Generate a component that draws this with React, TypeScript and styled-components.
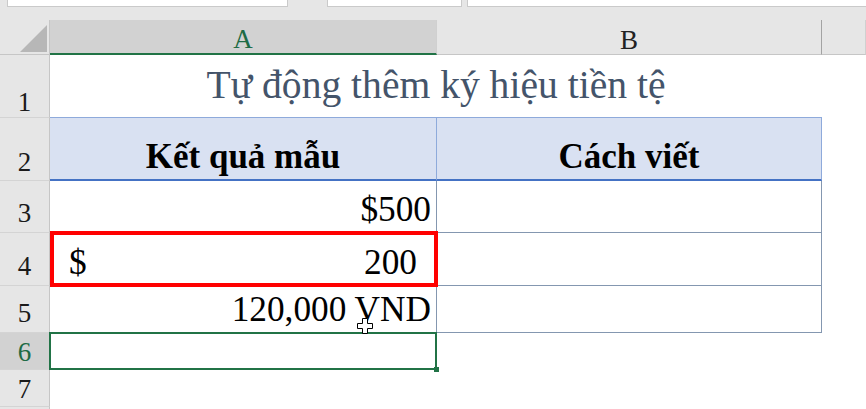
import React from "react";
import styled, { createGlobalStyle } from "styled-components";

const GlobalStyle = createGlobalStyle`
  html, body { margin: 0; padding: 0; background: #fff; overflow: hidden; }
  body { font-family: 'Liberation Serif', serif; }
`;

const Page = styled.div`
  width: 866px;
  height: 409px;
  display: flex;
  flex-direction: column;
  background: #fff;
  overflow: hidden;
  font-family: 'Liberation Serif', serif;
`;

const TopBar = styled.div`
  height: 20px;
  flex: none;
  background: #e6e6e6;
  display: flex;
  align-items: flex-start;
  padding-left: 7px;
  box-sizing: border-box;
`;

const FieldBox = styled.div<{ $w?: number; $ml?: number }>`
  height: 7px;
  background: #fff;
  border: 1px solid #cacaca;
  border-top: none;
  box-sizing: border-box;
  margin-left: ${(p) => p.$ml ?? 0}px;
  ${(p) => (p.$w ? `width: ${p.$w}px; flex: none;` : "flex: 1; border-right: none;")}
`;

const Sheet = styled.div`
  flex: none;
  display: grid;
  grid-template-columns: 50px 387px 385px 1fr;
  grid-template-rows: 35px 63px 63px 52px 53px 47px 37px 37px 10px;
  font-family: 'Liberation Serif', serif;
`;

const Corner = styled.div`
  background: #e6e6e6;
  border-right: 1px solid #c6c6c6;
  border-bottom: 1px solid #c6c6c6;
  box-sizing: border-box;
  display: flex;
  align-items: flex-end;
  justify-content: flex-end;
  padding: 0 2px 2px 0;
`;

const ColHead = styled.div<{ $sel?: boolean; $edge?: boolean }>`
  background: ${(p) => (p.$sel ? "#d2d2d2" : "#e6e6e6")};
  border-bottom: ${(p) => (p.$sel ? "2px solid #217346" : "1px solid #c6c6c6")};
  border-right: 1px solid ${(p) => (p.$edge ? "#a3a3a3" : "#d0d0d0")};
  color: ${(p) => (p.$sel ? "#1e6b45" : "#222")};
  font-family: 'Liberation Serif', serif;
  font-size: 27px;
  line-height: 1;
  display: flex;
  align-items: flex-end;
  justify-content: center;
  box-sizing: border-box;
`;

const RowHead = styled.div<{ $sel?: boolean; $pb: number }>`
  background: ${(p) => (p.$sel ? "#d2d2d2" : "#e6e6e6")};
  border-right: 1px solid #c6c6c6;
  border-bottom: 1px solid #d4d4d4;
  color: ${(p) => (p.$sel ? "#1e6b45" : "#1a1a1a")};
  font-family: 'Liberation Serif', serif;
  font-size: 27px;
  line-height: 1;
  display: flex;
  align-items: flex-end;
  justify-content: center;
  padding-bottom: ${(p) => p.$pb}px;
  box-sizing: border-box;
  overflow: hidden;
`;

const TitleCell = styled.div`
  grid-column: span 2;
  border-bottom: 1px solid #8eaadb;
  color: #44546a;
  font-family: 'Liberation Serif', serif;
  font-size: 39.6px;
  line-height: 1;
  display: flex;
  align-items: flex-end;
  justify-content: center;
  padding-bottom: 11px;
  box-sizing: border-box;
  white-space: nowrap;
`;

const HeadCell = styled.div`
  background: #d9e1f2;
  border-right: 1px solid #8eaadb;
  border-bottom: 2px solid #4472c4;
  color: #000;
  font-family: 'Liberation Serif', serif;
  font-size: 35px;
  font-weight: bold;
  line-height: 1;
  display: flex;
  align-items: flex-end;
  justify-content: center;
  padding-bottom: 5px;
  box-sizing: border-box;
  white-space: nowrap;
`;

const DataCell = styled.div<{ $justify?: string; $padX?: number; $marked?: boolean }>`
  position: relative;
  border-right: 1px solid #8497b0;
  border-bottom: 1px solid #8497b0;
  color: #000;
  font-family: 'Liberation Serif', serif;
  font-size: 35.3px;
  line-height: 1;
  display: flex;
  align-items: flex-end;
  justify-content: ${(p) => p.$justify ?? "flex-end"};
  padding: 0 ${(p) => p.$padX ?? 5}px 5px ${(p) => p.$padX ?? 5}px;
  box-sizing: border-box;
  white-space: nowrap;
  &::after {
    content: "";
    display: ${(p) => (p.$marked ? "block" : "none")};
    position: absolute;
    top: -2px;
    left: 0;
    right: -2px;
    bottom: -2px;
    border: 4px solid #ff0000;
    z-index: 2;
    pointer-events: none;
  }
`;

const SelectedCell = styled.div`
  position: relative;
  &::after {
    content: "";
    position: absolute;
    top: -1px;
    left: -1px;
    right: 0;
    bottom: 0;
    border: 2px solid #217346;
    z-index: 2;
  }
  &::before {
    content: "";
    position: absolute;
    width: 5px;
    height: 5px;
    right: -2px;
    bottom: -2px;
    background: #217346;
    z-index: 3;
  }
`;

const Blank = styled.div``;

const Cursor = styled.svg`
  position: absolute;
  left: 307px;
  top: 32px;
  width: 16px;
  height: 16px;
  z-index: 4;
`;

const rowPads = [1, 4, 5, 5, 5, 3, 3, 0];

export default function App() {
  return (
    <>
      <GlobalStyle />
      <Page>
        <TopBar>
          <FieldBox $w={281} />
          <FieldBox $w={135} $ml={39} />
          <FieldBox $ml={5} />
        </TopBar>
        <Sheet>
          <Corner>
            <svg width="27" height="27" viewBox="0 0 27 27">
              <polygon points="0,27 27,27 27,0" fill="#b7b7b7" />
            </svg>
          </Corner>
          <ColHead $sel>A</ColHead>
          <ColHead $edge>B</ColHead>
          <ColHead />

          <RowHead $pb={rowPads[0]}>1</RowHead>
          <TitleCell>Tự động thêm ký hiệu tiền tệ</TitleCell>
          <Blank />

          <RowHead $pb={rowPads[1]}>2</RowHead>
          <HeadCell>Kết quả mẫu</HeadCell>
          <HeadCell>Cách viết</HeadCell>
          <Blank />

          <RowHead $pb={rowPads[2]}>3</RowHead>
          <DataCell>$500</DataCell>
          <DataCell />
          <Blank />

          <RowHead $pb={rowPads[3]}>4</RowHead>
          <DataCell $justify="space-between" $padX={19} $marked>
            <span>$</span>
            <span>200</span>
          </DataCell>
          <DataCell />
          <Blank />

          <RowHead $pb={rowPads[4]}>5</RowHead>
          <DataCell>
            120,000 VND
            <Cursor viewBox="0 0 16 16">
              <path
                d="M5.5 0.5H10.5V5.5H15.5V10.5H10.5V15.5H5.5V10.5H0.5V5.5H5.5Z"
                fill="#fff"
                stroke="#000"
                strokeWidth="1"
              />
            </Cursor>
          </DataCell>
          <DataCell />
          <Blank />

          <RowHead $sel $pb={rowPads[5]}>6</RowHead>
          <SelectedCell />
          <Blank />
          <Blank />

          <RowHead $pb={rowPads[6]}>7</RowHead>
          <Blank />
          <Blank />
          <Blank />

          <RowHead $pb={rowPads[7]} />
          <Blank />
          <Blank />
          <Blank />
        </Sheet>
      </Page>
    </>
  );
}
